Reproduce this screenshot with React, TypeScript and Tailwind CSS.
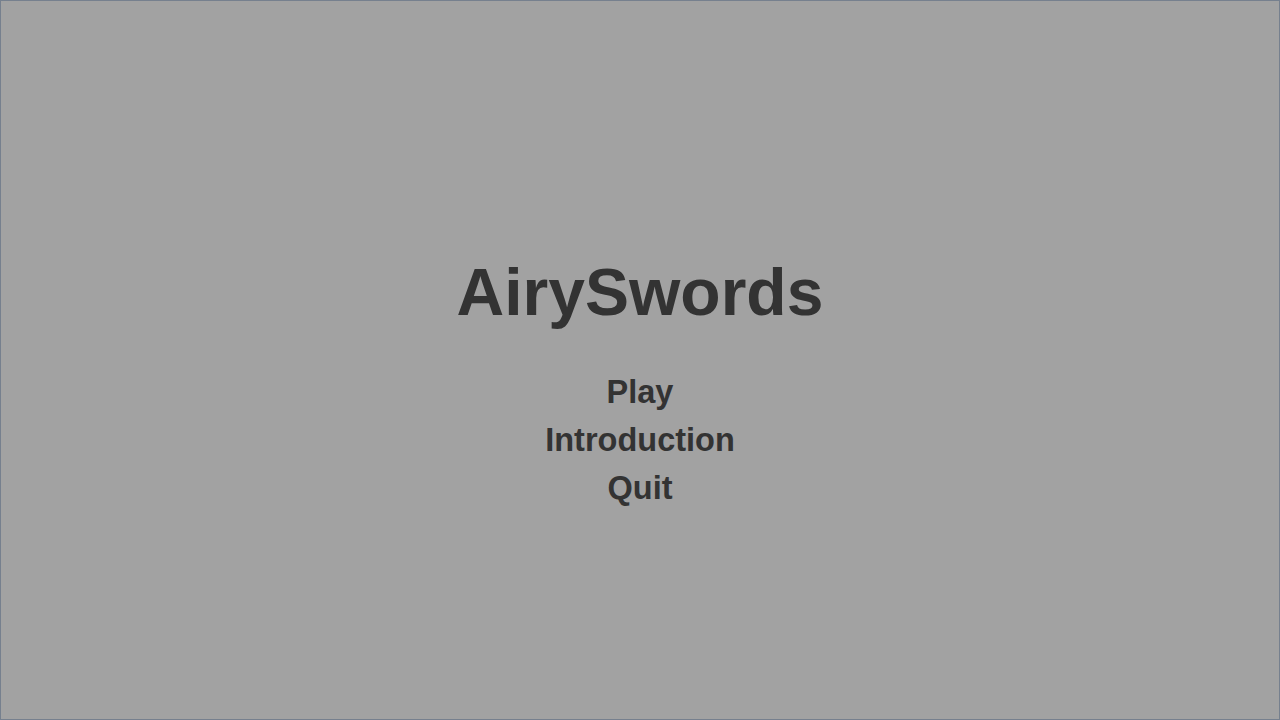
export default function App() {
  const items = ["Play", "Introduction", "Quit"];
  return (
    <div className="h-[720px] w-[1280px] border border-[#76808e] bg-[#a2a2a2] font-['Liberation_Sans',Arial,sans-serif] text-[#333333]">
      <div className="flex flex-col items-center pt-[258px]">
        <h1 className="text-[66px] font-bold leading-none">AirySwords</h1>
        <div className="mt-[43px] flex flex-col items-center">
          {items.map((item) => (
            <button key={item} className="text-[32.5px] font-bold leading-[48px]">
              {item}
            </button>
          ))}
        </div>
      </div>
    </div>
  );
}
